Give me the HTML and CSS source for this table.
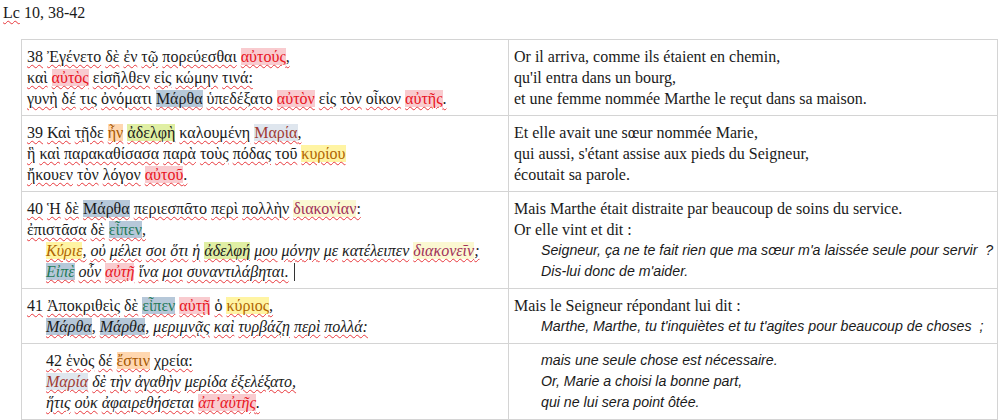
FILE: index.html
```html
<!DOCTYPE html>
<html lang="fr">
<head>
    <meta charset="UTF-8">
    <title>Lc 10, 38-42</title>
    <link rel="stylesheet" href="styles.css">
</head>
<body>
    <div class="title gr"><span>Lc</span> 10, 38-42</div>
    <table class="synopsis">
        <tr>
            <td class="gr">
                <div>38 Ἐγένετο δὲ ἐν τῷ πορεύεσθαι <span class="red">αὐτούς</span>,</div>
                <div>καὶ <span class="red">αὐτὸς</span> εἰσῆλθεν εἰς κώμην τινά:</div>
                <div>γυνὴ δέ τις ὀνόματι <span class="blu">Μάρθα</span> ὑπεδέξατο <span class="red">αὐτὸν</span> εἰς τὸν οἶκον <span class="red">αὐτῆς</span>.</div>
            </td>
            <td class="fr">
                <div>Or il arriva, comme ils étaient en chemin,</div>
                <div>qu'il entra dans un bourg,</div>
                <div>et une femme nommée Marthe le reçut dans sa maison.</div>
            </td>
        </tr>
        <tr>
            <td class="gr">
                <div>39 Καὶ τῇδε <span class="ora">ἦν</span> <span class="grn">ἀδελφὴ</span> καλουμένη <span class="mar">Μαρία</span>,</div>
                <div>ἣ καὶ παρακαθίσασα παρὰ τοὺς πόδας τοῦ <span class="yel">κυρίου</span></div>
                <div>ἤκουεν τὸν λόγον <span class="red">αὐτοῦ</span>.</div>
            </td>
            <td class="fr">
                <div>Et elle avait une sœur nommée Marie,</div>
                <div>qui aussi, s'étant assise aux pieds du Seigneur,</div>
                <div>écoutait sa parole.</div>
            </td>
        </tr>
        <tr>
            <td class="gr">
                <div>40 Ἡ δὲ <span class="blu">Μάρθα</span> περιεσπᾶτο περὶ πολλὴν <span class="dia">διακονίαν</span>:</div>
                <div>ἐπιστᾶσα δὲ <span class="eip">εἶπεν</span>,</div>
                <div class="ind it"><span class="yel">Κύριε</span>, οὐ μέλει σοι ὅτι ἡ <span class="grn">ἀδελφή</span> μου μόνην με κατέλειπεν <span class="dia">διακονεῖν</span>;</div>
                <div class="ind it"><span class="eip">Εἰπὲ</span> οὖν <span class="red">αὐτῇ</span> ἵνα μοι συναντιλάβηται.<span class="cursor"></span></div>
            </td>
            <td class="fr">
                <div>Mais Marthe était distraite par beaucoup de soins du service.</div>
                <div>Or elle vint et dit :</div>
                <div class="ind it">Seigneur, ça ne te fait rien que ma sœur m'a laissée seule pour servir&nbsp; ?</div>
                <div class="ind it">Dis-lui donc de m'aider.</div>
            </td>
        </tr>
        <tr>
            <td class="gr">
                <div>41 Ἀποκριθεὶς δὲ <span class="eip">εἶπεν</span> <span class="red">αὐτῇ</span> ὁ <span class="yel">κύριος</span>,</div>
                <div class="ind it"><span class="blu">Μάρθα</span>, <span class="blu">Μάρθα</span>, μεριμνᾷς καὶ τυρβάζῃ περὶ πολλά:</div>
            </td>
            <td class="fr">
                <div>Mais le Seigneur répondant lui dit :</div>
                <div class="ind it">Marthe, Marthe, tu t'inquiètes et tu t'agites pour beaucoup de choses&nbsp; ;</div>
            </td>
        </tr>
        <tr>
            <td class="gr">
                <div class="ind">42 ἑνὸς δέ <span class="ora">ἔστιν</span> χρεία:</div>
                <div class="ind it"><span class="mar">Μαρία</span> δὲ τὴν ἀγαθὴν μερίδα ἐξελέξατο,</div>
                <div class="ind it">ἥτις οὐκ ἀφαιρεθήσεται <span class="red">ἀπ’αὐτῆς</span>.</div>
            </td>
            <td class="fr">
                <div class="ind it">mais une seule chose est nécessaire.</div>
                <div class="ind it">Or, Marie a choisi la bonne part,</div>
                <div class="ind it">qui ne lui sera point ôtée.</div>
            </td>
        </tr>
    </table>
    <script>
        // spell-check squiggles: wrap each word of the Greek text
        function wrapWords(node) {
            Array.from(node.childNodes).forEach(function (child) {
                if (child.nodeType === 3) {
                    const frag = document.createDocumentFragment();
                    child.textContent.split(/(\s+)/).forEach(function (part) {
                        if (!part) return;
                        if (/^\s+$/.test(part)) {
                            frag.appendChild(document.createTextNode(part));
                        } else {
                            const span = document.createElement('span');
                            span.className = 'sp';
                            span.textContent = part;
                            frag.appendChild(span);
                        }
                    });
                    child.replaceWith(frag);
                } else if (child.nodeType === 1 && !child.classList.contains('cursor')) {
                    wrapWords(child);
                }
            });
        }
        document.querySelectorAll('td.gr').forEach(wrapWords);
        document.querySelectorAll('.title > span').forEach(wrapWords);
    </script>
</body>
</html>
```

FILE: styles.css
```css
body {
    font-family: "Liberation Serif", "DejaVu Serif", serif;
    font-size: 16px;
    color: #1a1a1a;
    background-color: white;
    margin: 0;
    padding: 4px 3px;
}

.title {
    line-height: 18px;
}

.synopsis {
    border-collapse: collapse;
    margin: 17px 0 0 18px;
    width: 977px;
    table-layout: fixed;
}

.synopsis td {
    border: 1px solid #d4d4d4;
    vertical-align: top;
    padding: 6px 5px;
    line-height: 21px;
    width: 50%;
    white-space: nowrap;
}

.synopsis td.gr {
    width: 476px;
}

.ind {
    padding-left: 19px;
}

.fr .ind {
    padding-left: 27px;
}

.fr .it {
    font-family: "Liberation Sans", Arial, sans-serif;
    font-style: italic;
    font-size: 14.2px;
}

.gr .it {
    font-style: italic;
}

.sp {
    text-decoration: underline wavy #e8383c;
    text-decoration-thickness: 1px;
    text-underline-offset: 2px;
}

.cursor {
    display: inline-block;
    width: 1px;
    height: 18px;
    background-color: #333;
    margin-left: 5px;
    vertical-align: -4px;
}

.red {
    background-color: #f9cbcf;
    color: #e8141e;
}

.blu {
    background-color: #b6c8d9;
}

.ora {
    background-color: #ffd7b0;
    color: #a65800;
}

.grn {
    background-color: #e0efa4;
}

.mar {
    background-color: #dfe6ee;
    color: #a13a32;
}

.yel {
    background-color: #fff4a3;
    color: #b06400;
}

.dia {
    background-color: #fbf8d2;
    color: #a0305a;
}

.eip {
    background-color: #b6c8d9;
    color: #247a58;
}
```
